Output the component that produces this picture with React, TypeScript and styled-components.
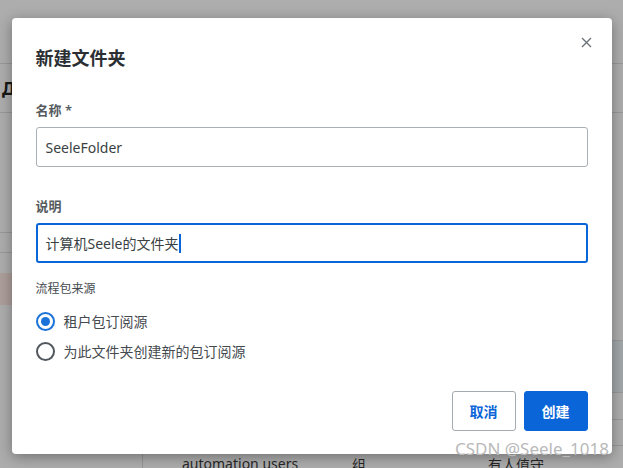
import React from "react";
import styled, { createGlobalStyle } from "styled-components";

const GlobalStyle = createGlobalStyle`
  html, body {
    margin: 0;
    padding: 0;
    width: 100%;
    height: 100%;
    overflow: hidden;
  }
  body {
    font-family: "Noto Sans", "Noto Sans CJK SC", sans-serif;
    background: #ffffff;
  }
  * { box-sizing: border-box; }
`;

const Page = styled.div`
  width: 623px;
  height: 468px;
  position: relative;
  background: #ffffff;
  display: flex;
  flex-direction: column;
`;

const TopBar = styled.div`
  height: 64px;
  flex: none;
  border-bottom: 1px solid #e2e2e2;
`;

const SubBar = styled.div`
  height: 49px;
  flex: none;
  border-bottom: 1px solid #e2e2e2;
  display: flex;
  align-items: center;
  padding-left: 2px;
  font-size: 17px;
  font-weight: 700;
  color: #222;
`;

const Body = styled.div`
  flex: 1;
  display: flex;
`;

const Sidebar = styled.div`
  width: 143px;
  flex: none;
  border-right: 1px solid #dcdcdc;
  display: flex;
  flex-direction: column;
`;

const SideBlock = styled.div<{ h: number; line?: boolean; active?: boolean }>`
  height: ${({ h }) => h}px;
  flex: none;
  border-bottom: ${({ line }) => (line ? "1px solid #e2e2e2" : "none")};
  background: ${({ active }) => (active ? "#ffe9e4" : "transparent")};
`;

const Main = styled.div`
  flex: 1;
  display: flex;
  flex-direction: column;
`;

const Row = styled.div<{ h: number; selected?: boolean }>`
  height: ${({ h }) => h}px;
  flex: none;
  border-bottom: 1px solid #e2e2e2;
  background: ${({ selected }) => (selected ? "#eef6fa" : "transparent")};
  display: flex;
  align-items: center;
  padding-left: 39px;
  font-size: 14px;
  color: #3a3a3a;
`;

const Cell = styled.div<{ w?: number }>`
  width: ${({ w }) => (w ? `${w}px` : "auto")};
  flex: none;
  white-space: nowrap;
`;

const Backdrop = styled.div`
  position: absolute;
  inset: 0;
  background: rgba(0, 0, 0, 0.32);
  display: flex;
  justify-content: center;
  align-items: flex-start;
  padding-top: 18px;
`;

const Dialog = styled.div`
  position: relative;
  width: 600px;
  height: 436px;
  background: #ffffff;
  border-radius: 4px;
  box-shadow: 0 3px 14px rgba(0, 0, 0, 0.35);
  padding: 28px 24px 23px;
  display: flex;
  flex-direction: column;
`;

const Title = styled.h2`
  margin: 0;
  font-size: 18px;
  line-height: 24px;
  font-weight: 700;
  color: #2b2f33;
`;

const CloseButton = styled.button`
  position: absolute;
  top: 17px;
  right: 18px;
  width: 14px;
  height: 14px;
  padding: 0;
  border: none;
  background: none;
  display: flex;
  align-items: center;
  justify-content: center;
`;

const Field = styled.div<{ top: number }>`
  margin-top: ${({ top }) => top}px;
  display: flex;
  flex-direction: column;
  gap: 8px;
`;

const Label = styled.div`
  font-size: 13px;
  line-height: 18px;
  font-weight: 600;
  color: #565b60;
`;

const Input = styled.div<{ focused?: boolean }>`
  height: 40px;
  border: ${({ focused }) => (focused ? "2px solid #0a66d8" : "1px solid #a9b1b7")};
  border-radius: 3px;
  padding-left: ${({ focused }) => (focused ? "8px" : "9px")};
  display: flex;
  align-items: center;
  font-size: 14px;
  color: #3a3f44;
`;

const Caret = styled.span`
  display: inline-block;
  width: 2px;
  height: 19px;
  background: #0a66d8;
  margin-left: 0px;
`;

const SectionLabel = styled.div`
  margin-top: 17px;
  font-size: 12px;
  line-height: 18px;
  color: #444a4f;
`;

const RadioGroup = styled.div`
  margin-top: 8px;
  display: flex;
  flex-direction: column;
`;

const RadioRow = styled.label`
  height: 30px;
  display: flex;
  align-items: center;
  gap: 9px;
  font-size: 14px;
  color: #454a4f;
`;

const RadioCircle = styled.span<{ checked?: boolean }>`
  width: 19px;
  height: 19px;
  border-radius: 50%;
  border: 2px solid ${({ checked }) => (checked ? "#1b72d8" : "#50575d")};
  display: flex;
  align-items: center;
  justify-content: center;
  flex: none;

  &::after {
    content: "";
    width: 9px;
    height: 9px;
    border-radius: 50%;
    background: ${({ checked }) => (checked ? "#1b72d8" : "transparent")};
  }
`;

const Footer = styled.div`
  margin-top: auto;
  display: flex;
  justify-content: flex-end;
  gap: 8px;
`;

const Button = styled.button<{ primary?: boolean }>`
  width: 64px;
  height: 40px;
  border-radius: 3px;
  border: 1px solid ${({ primary }) => (primary ? "#0a66d8" : "#a3abb1")};
  background: ${({ primary }) => (primary ? "#0a66d8" : "#ffffff")};
  color: ${({ primary }) => (primary ? "#ffffff" : "#0a66d8")};
  font-family: "Noto Sans", "Noto Sans CJK SC", sans-serif;
  font-size: 14px;
  font-weight: 700;
  padding: 0;
`;

const Watermark = styled.div`
  position: absolute;
  right: 14px;
  top: 437px;
  font-size: 17px;
  line-height: 24px;
  color: #b9b9b9;
  white-space: nowrap;
`;

const App = () => {
  return (
    <>
      <GlobalStyle />
      <Page>
        <TopBar />
        <SubBar>Д</SubBar>
        <Body>
          <Sidebar>
            <SideBlock h={120} line />
            <SideBlock h={20} line />
            <SideBlock h={20} />
            <SideBlock h={32} active />
          </Sidebar>
          <Main>
            <Row h={228} />
            <Row h={52} selected />
            <Row h={27} />
            <Row h={26} />
            <Row h={36}>
              <Cell w={170}>automation users</Cell>
              <Cell w={136}>组</Cell>
              <Cell>有人值守</Cell>
            </Row>
          </Main>
        </Body>
        <Backdrop>
          <Dialog>
            <CloseButton aria-label="close">
              <svg width="11" height="11" viewBox="0 0 11 11">
                <path d="M1 1 L10 10 M10 1 L1 10" stroke="#6d7378" strokeWidth="1.4" fill="none" />
              </svg>
            </CloseButton>
            <Title>新建文件夹</Title>
            <Field top={31}>
              <Label>名称 *</Label>
              <Input>SeeleFolder</Input>
            </Field>
            <Field top={30}>
              <Label>说明</Label>
              <Input focused>
                计算机Seele的文件夹
                <Caret />
              </Input>
            </Field>
            <SectionLabel>流程包来源</SectionLabel>
            <RadioGroup>
              <RadioRow>
                <RadioCircle checked />
                租户包订阅源
              </RadioRow>
              <RadioRow>
                <RadioCircle />
                为此文件夹创建新的包订阅源
              </RadioRow>
            </RadioGroup>
            <Footer>
              <Button>取消</Button>
              <Button primary>创建</Button>
            </Footer>
          </Dialog>
        </Backdrop>
        <Watermark>CSDN @Seele_1018</Watermark>
      </Page>
    </>
  );
};

export default App;
